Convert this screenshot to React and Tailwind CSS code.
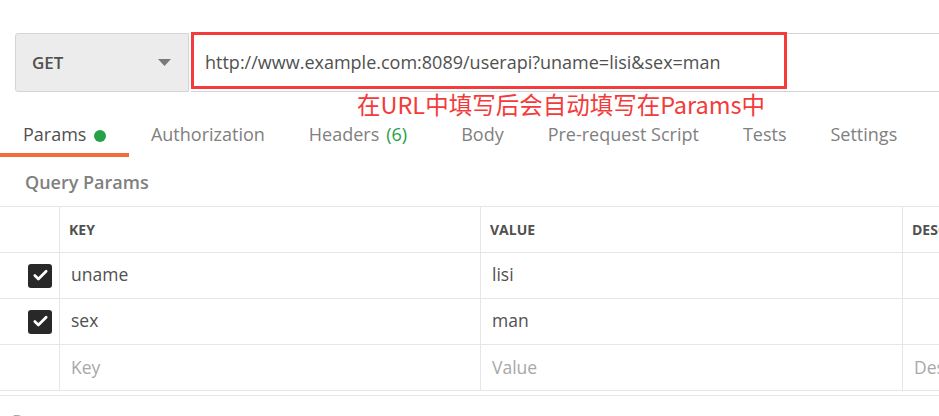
import { Check } from "lucide-react";

const tabs = [
  { label: "Params", dot: true, active: true },
  { label: "Authorization" },
  { label: "Headers", count: "(6)" },
  { label: "Body" },
  { label: "Pre-request Script" },
  { label: "Tests" },
  { label: "Settings" },
];

const rows = [
  { key: "uname", value: "lisi", checked: true },
  { key: "sex", value: "man", checked: true },
];

export default function App() {
  return (
    <div
      className="w-[939px] h-[416px] overflow-hidden bg-white text-[#505050]"
      style={{ fontFamily: '"Open Sans", "Noto Sans CJK SC", sans-serif' }}
    >
      {/* request bar */}
      <div className="pt-[33px] pl-[15px] flex">
        <div className="w-[174px] h-[59px] shrink-0 flex items-center justify-between pl-[16px] pr-[17px] bg-[#ececec] border border-[#d4d4d4] rounded-l-[3px]">
          <span className="text-[17px] font-semibold text-[#505050]">GET</span>
          <svg width="13" height="7" viewBox="0 0 13 7">
            <path d="M0 0h13L6.5 7z" fill="#7a7a7a" />
          </svg>
        </div>
        <div className="relative flex-1 h-[59px] flex items-center border-y border-[#d4d4d4] pl-[14px] ml-[2px] min-w-[760px]">
          <span className="text-[18px] text-[#505050]">
            http://www.example.com:8089/userapi?uname=lisi&amp;sex=man
          </span>
          {/* annotation box */}
          <div className="absolute left-0 top-[-2px] w-[596px] h-[57px] border-[3px] border-[#f33b3b]" />
          <div
            className="absolute left-[166px] top-[55px] text-[23.5px] leading-[30px] text-[#f33b3b] whitespace-nowrap"
            style={{ fontFamily: '"Noto Sans CJK SC", "Open Sans", sans-serif' }}
          >
            在URL中填写后会自动填写在Params中
          </div>
        </div>
      </div>

      {/* tabs */}
      <div className="flex mt-[26px] whitespace-nowrap">
        {tabs.map((t) => (
          <div
            key={t.label}
            className={
              "h-[39px] px-[22px] flex items-start pt-[3px] text-[18px] border-b-[4px] " +
              (t.active ? "border-[#f26b3a] text-[#505050] pl-[23px] pr-[22.5px]" : "border-transparent text-[#808080]") +
              (t.count ? " mr-[10px]" : "")
            }
          >
            {t.label}
            {t.count && <span className="ml-[7px] text-[#26a148]">{t.count}</span>}
            {t.dot && <span className="ml-[8px] mt-[9px] w-[12px] h-[12px] rounded-full bg-[#26a148]" />}
          </div>
        ))}
      </div>

      {/* query params */}
      <div className="pl-[25px] pt-[13px] pb-[12px] text-[18px] font-semibold text-[#808080] leading-[24px]">
        Query Params
      </div>

      <div className="border-t border-[#e6e6e6] w-[1000px]">
        <div className="flex h-[46px] border-b border-[#e6e6e6] text-[14px] font-bold text-[#505050]">
          <div className="w-[60px] shrink-0 border-r border-[#e6e6e6]" />
          <div className="w-[421px] shrink-0 border-r border-[#e6e6e6] flex items-center pl-[9px]">KEY</div>
          <div className="w-[422px] shrink-0 border-r border-[#e6e6e6] flex items-center pl-[9px]">VALUE</div>
          <div className="flex-1 flex items-center pl-[9px]">DESCRIPTION</div>
        </div>
        {rows.map((r) => (
          <div key={r.key} className="flex h-[46px] border-b border-[#e6e6e6] text-[17.5px] text-[#505050]">
            <div className="w-[60px] shrink-0 border-r border-[#e6e6e6] flex items-center justify-end pr-[7px]">
              <div className="w-[24px] h-[24px] rounded-[3px] bg-[#282828] flex items-center justify-center">
                <Check size={17} strokeWidth={3.8} color="#ffffff" />
              </div>
            </div>
            <div className="w-[421px] shrink-0 border-r border-[#e6e6e6] flex items-center pl-[11px] pb-[2px]">{r.key}</div>
            <div className="w-[422px] shrink-0 border-r border-[#e6e6e6] flex items-center pl-[11px] pb-[2px]">{r.value}</div>
            <div className="flex-1" />
          </div>
        ))}
        <div className="flex h-[46px] border-b border-[#e6e6e6] text-[17.5px] text-[#a8a8a8]">
          <div className="w-[60px] shrink-0 border-r border-[#e6e6e6]" />
          <div className="w-[421px] shrink-0 border-r border-[#e6e6e6] flex items-center pl-[11px]">Key</div>
          <div className="w-[422px] shrink-0 border-r border-[#e6e6e6] flex items-center pl-[11px]">Value</div>
          <div className="flex-1 flex items-center pl-[11px]">Description</div>
        </div>
      </div>
      <div className="mt-[4px] border-t border-[#e6e6e6] w-full pl-[12px] pt-[12px] text-[18px] text-[#a8a8a8]">
        Response
      </div>
    </div>
  );
}
